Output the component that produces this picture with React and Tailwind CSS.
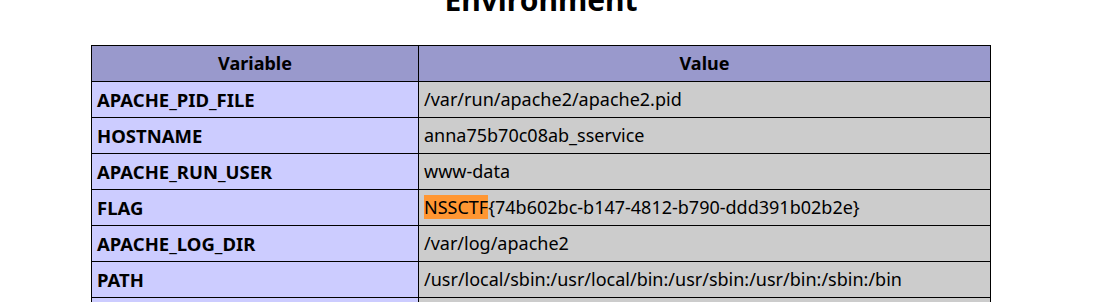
import React from "react"

const rows = [
  ["APACHE_PID_FILE", "/var/run/apache2/apache2.pid"],
  ["HOSTNAME", "anna75b70c08ab_sservice"],
  ["APACHE_RUN_USER", "www-data"],
  ["FLAG", "flag"],
  ["APACHE_LOG_DIR", "/var/log/apache2"],
  ["PATH", "/usr/local/sbin:/usr/local/bin:/usr/sbin:/usr/bin:/sbin:/bin"],
  ["APACHE_RUN_DIR", "/var/run/apache2"],
]

const App = () => {
  return (
    <div className="h-[302px] overflow-hidden bg-white text-black font-['Noto_Sans',sans-serif]">
      <div className="ml-[91px] w-[900px]">
        <h2 className="mt-[-24px] mb-[22px] h-[47px] text-center text-[30px] font-bold leading-[47px]">
          Environment
        </h2>
        <table className="w-[900px] border-collapse text-[18px]">
          <thead>
            <tr className="h-[36px] bg-[#9999cc]">
              <th className="w-[327px] border border-black px-[5px] font-bold">Variable</th>
              <th className="border border-black px-[5px] font-bold">Value</th>
            </tr>
          </thead>
          <tbody>
            {rows.map(([name, value]) => (
              <tr key={name} className="h-[36px]">
                <td className="border border-black bg-[#ccccff] px-[5px] text-[18.5px] font-bold">{name}</td>
                <td className="border border-black bg-[#cccccc] px-[5px]">
                  {name === "FLAG" ? (
                    <>
                      <span className="bg-[#ff9632]">NSSCTF</span>
                      {"{74b602bc-b147-4812-b790-ddd391b02b2e}"}
                    </>
                  ) : (
                    value
                  )}
                </td>
              </tr>
            ))}
          </tbody>
        </table>
      </div>
    </div>
  )
}

export default App
